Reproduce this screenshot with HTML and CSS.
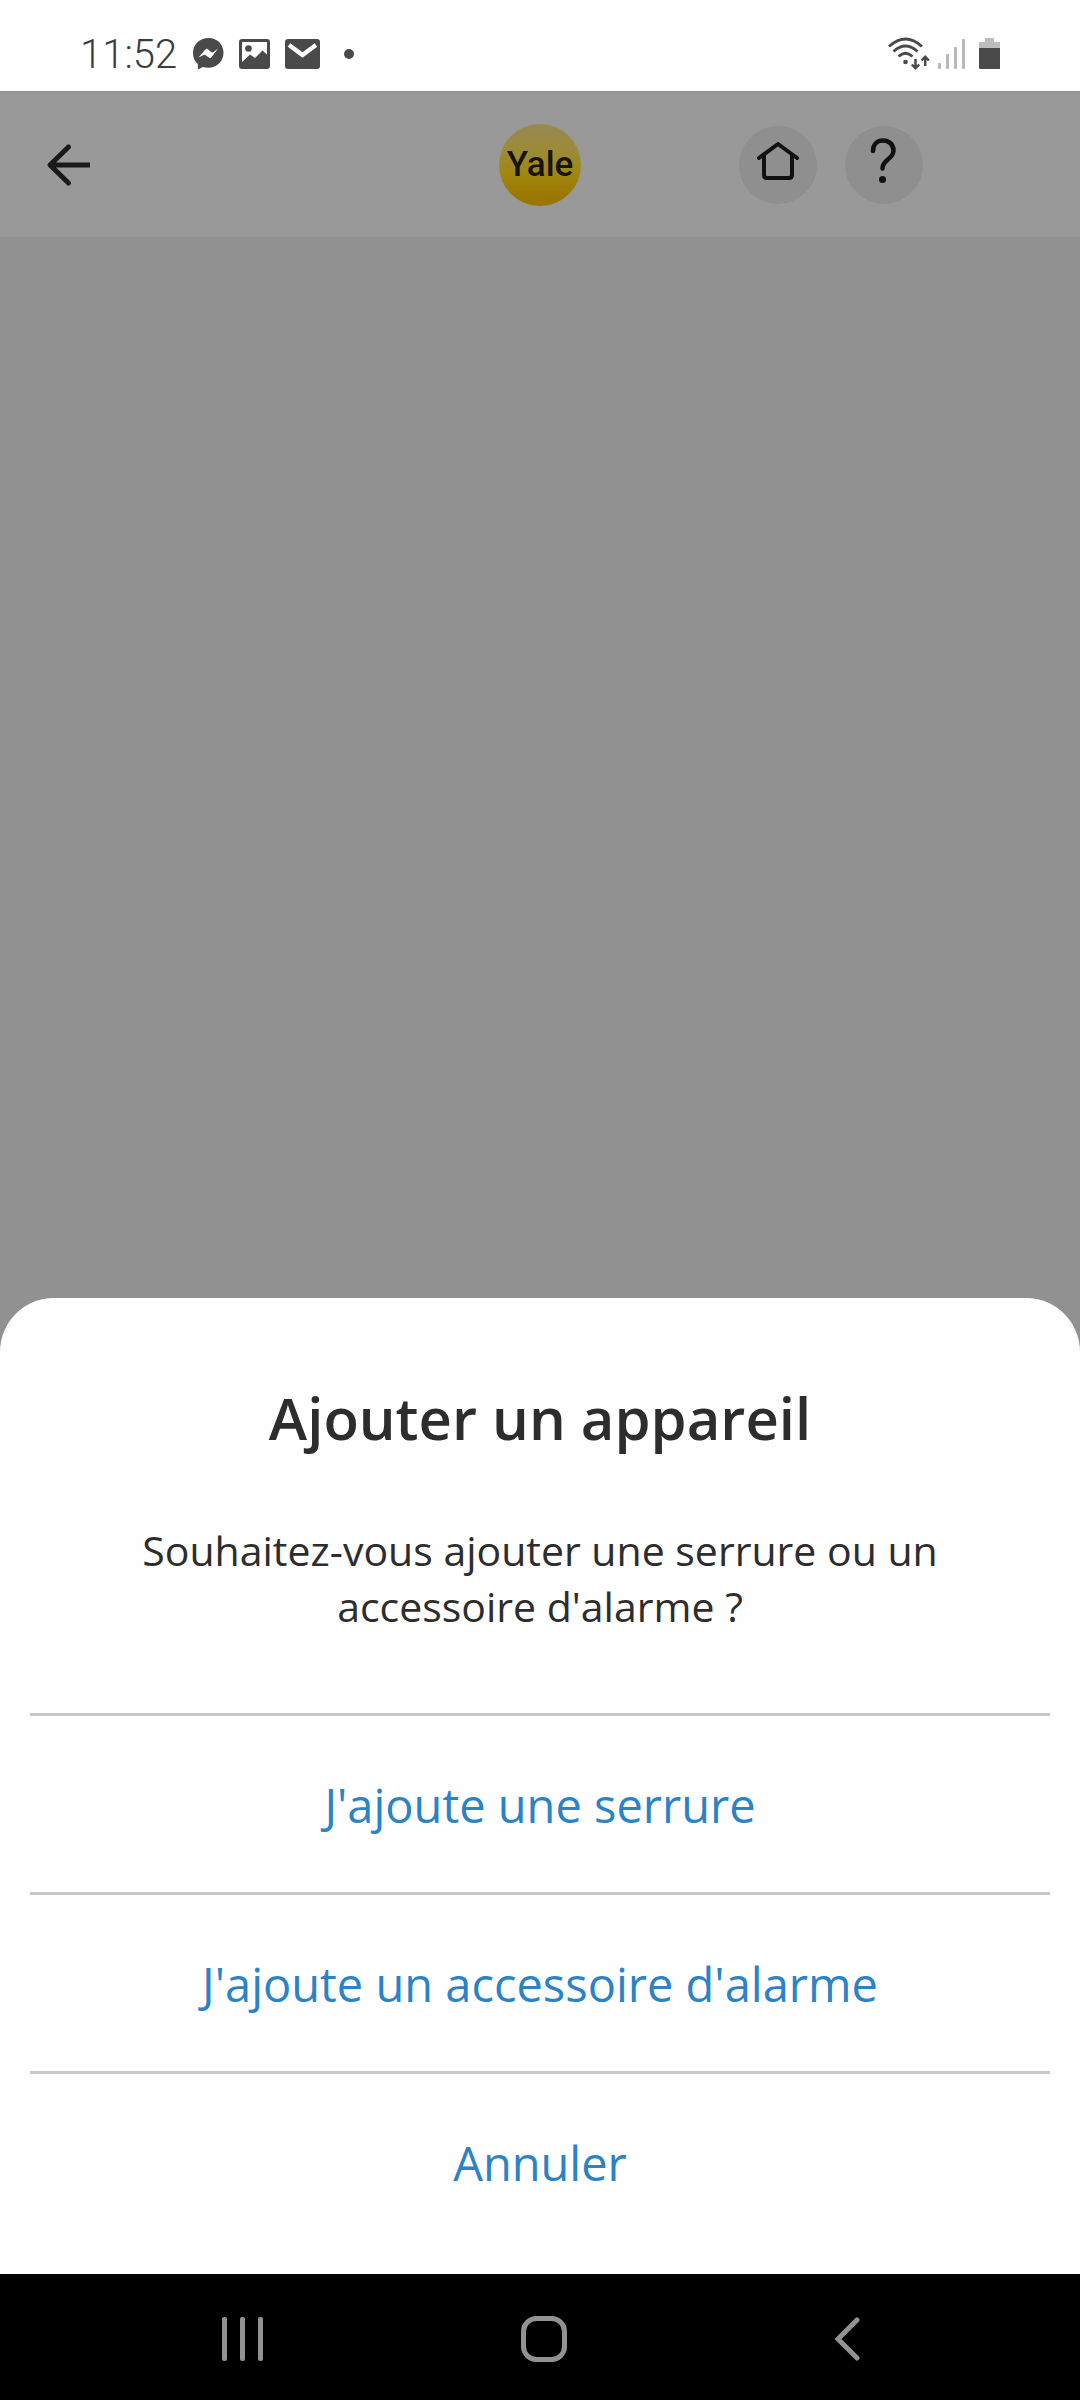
FILE: index.html
```html
<!DOCTYPE html>
<html lang="fr">
<head>
<meta charset="utf-8">
<meta name="viewport" content="width=device-width, initial-scale=1">
<title>Ajouter un appareil</title>
<link rel="stylesheet" href="styles.css">
</head>
<body>
<div class="screen">
  <div class="status-bar">
    <div class="status-left">
      <time class="clock">11:52</time>
      <svg width="32" height="32" viewBox="0 0 32 32" aria-hidden="true">
        <path fill="#4a4a4a" d="M16.500 0C25.500 0 31.500 6.500 31.500 14.800S25 29.800 16.300 29.800c-1.900 0-3.700-.3-5.300-.8L6 31.500 5.800 26C2.600 23.300 1 19.400 1 14.900 1 6.500 7.600 0 16.500 0Z"/>
        <path fill="#fff" d="M6.500 19.500 13.300 11.500q1.400-1.200 2.800-.1l3.400 2.800q.8.500 1.600 0l5-3.800-6.900 9q-1.100 1.200-2.500.2l-3.300-2.600q-.8-.6-1.600 0Z"/>
      </svg>
      <svg width="31" height="30" viewBox="0 0 31 30" aria-hidden="true">
        <rect width="31" height="30" rx="3" fill="#4a4a4a"/>
        <path fill="#fff" d="M3 3H28V15.500L23.500 11.500 16 19 11 15.500 3 23Z"/>
        <circle cx="9.500" cy="9.500" r="3.300" fill="#4a4a4a"/>
      </svg>
      <svg width="35" height="30" viewBox="0 0 35 30" aria-hidden="true">
        <rect width="35" height="30" rx="3" fill="#4a4a4a"/>
        <path fill="none" stroke="#fff" stroke-width="4.500" d="M4 6 17.500 16 31 6"/>
      </svg>
      <span class="more-dot"></span>
    </div>
    <div class="status-right">
      <svg width="42" height="34" viewBox="0 0 42 34" fill="none" stroke="#4a4a4a" aria-hidden="true">
        <path stroke-width="2.800" d="M1 9.500Q17.500-5.500 34 9.500M5.500 14.500Q17.500 3.500 29.500 14.500M10.500 19.500Q17.500 13 24.500 19.500"/>
        <circle cx="17.500" cy="25" r="2.300" fill="#4a4a4a" stroke="none"/>
        <path stroke-width="2.500" d="M27.500 22V31M23.800 27.500 27.500 31.300 31.200 27.500M37.200 29V20M33.500 23.500 37.200 19.700 40.900 23.500"/>
      </svg>
      <svg width="28" height="32" viewBox="0 0 28 32" fill="#b8b8b8" aria-hidden="true">
        <rect x="0" y="25" width="3" height="6" rx="1"/>
        <rect x="8" y="16" width="3" height="15" rx="1"/>
        <rect x="16" y="9" width="3" height="22" rx="1"/>
        <rect x="24" y="1" width="3" height="30" rx="1"/>
      </svg>
      <svg class="battery" width="21" height="32" viewBox="0 0 21 32" aria-hidden="true">
        <path fill="#bdbdbd" d="M6 0H15V4H21V11H0V4H6Z"/>
        <path fill="#4a4a4a" d="M0 10H21V31H1.500Q0 31 0 29.500Z"/>
      </svg>
    </div>
  </div>

  <header class="app-bar">
    <button class="back" aria-label="Retour">
      <svg width="44" height="44" viewBox="0 0 44 44" fill="none" stroke="#1a1a1a" stroke-width="5" stroke-linejoin="round" aria-hidden="true">
        <path d="M44 22H4"/><path stroke-linecap="round" d="M22.500 4 4 22 22.500 40"/>
      </svg>
    </button>
    <span class="logo">Yale</span>
    <div class="actions">
      <button class="round" aria-label="Accueil">
        <svg width="42" height="42" viewBox="0 0 42 42" fill="none" stroke="#111" stroke-width="4" stroke-linecap="round" stroke-linejoin="round" aria-hidden="true">
          <path d="M2 18 21 4 40 18M7 15V35Q7 38 10 38H32Q35 38 35 35V15"/>
        </svg>
      </button>
      <button class="round" aria-label="Aide">
        <svg width="28" height="46" viewBox="0 0 28 46" fill="none" stroke="#111" stroke-width="4.500" stroke-linecap="round" aria-hidden="true">
          <path d="M3 13C3 6.500 7 2.500 13 2.500S23.500 6.500 23.500 12.500C23.500 21.500 12.500 21 12.500 30.500"/>
          <circle cx="12.500" cy="41.500" r="3.500" fill="#111" stroke="none"/>
        </svg>
      </button>
    </div>
  </header>

  <main class="backdrop">
    <section class="sheet" role="dialog" aria-labelledby="sheet-title">
      <h1 class="title" id="sheet-title">Ajouter un appareil</h1>
      <p class="message">Souhaitez-vous ajouter une serrure ou un accessoire d'alarme ?</p>
      <div class="choices">
        <button class="choice">J'ajoute une serrure</button>
        <button class="choice">J'ajoute un accessoire d'alarme</button>
        <button class="choice">Annuler</button>
      </div>
    </section>
  </main>

  <nav class="system-nav">
    <button aria-label="Applications récentes">
      <svg width="41" height="46" viewBox="0 0 41 46" fill="#929292" aria-hidden="true">
        <rect x="0" y="1" width="5" height="44" rx="2"/><rect x="18" y="1" width="5" height="44" rx="2"/><rect x="36" y="1" width="5" height="44" rx="2"/>
      </svg>
    </button>
    <button aria-label="Écran d'accueil">
      <svg width="46" height="46" viewBox="0 0 46 46" fill="none" stroke="#929292" stroke-width="5" aria-hidden="true">
        <rect x="2.500" y="2.500" width="41" height="41" rx="13"/>
      </svg>
    </button>
    <button aria-label="Précédent">
      <svg width="26" height="46" viewBox="0 0 26 46" fill="none" stroke="#929292" stroke-width="5" stroke-linecap="round" aria-hidden="true">
        <path d="M23 4 4 23 23 42"/>
      </svg>
    </button>
  </nav>
</div>
</body>
</html>
```
FILE: styles.css
```css
* {
  box-sizing: border-box;
}

body {
  margin: 0;
  font-family: "Open Sans", "Noto Sans", sans-serif;
  color: #2d2d2d;
  background: #fff;
}

button {
  margin: 0;
  padding: 0;
  border: 0;
  background: none;
  font: inherit;
  color: inherit;
  cursor: pointer;
}

svg {
  display: block;
}

.screen {
  display: flex;
  flex-direction: column;
  min-height: 100vh;
}

/* Phone status bar */
.status-bar {
  display: flex;
  justify-content: space-between;
  align-items: center;
  height: 91px;
  padding: 16px 80px 0;
}

.status-left {
  display: flex;
  align-items: center;
  gap: 15px;
}

.clock {
  padding-top: 2px;
  font: 300 40px/40px Roboto, sans-serif;
  color: #3c3c3c;
}

.more-dot {
  width: 10px;
  height: 10px;
  margin-left: 9px;
  border-radius: 50%;
  background: #4a4a4a;
}

.status-right {
  display: flex;
  align-items: center;
  gap: 8px;
}

.battery {
  margin-left: 5px;
}

/* Dimmed app header */
.app-bar {
  display: grid;
  grid-template-columns: 1fr auto 1fr;
  align-items: center;
  height: 146px;
  padding: 0 46px;
  background: #999;
  border-top: 1px solid #8c8c8c;
}

.back {
  justify-self: start;
}

.logo {
  display: flex;
  justify-content: center;
  width: 82px;
  height: 82px;
  border-radius: 50%;
  background: linear-gradient(#98894c 10%, #9c8b35 35%, #a08611 60%, #9a7800 90%);
  font: 500 35px/82px Roboto, sans-serif;
  color: #16140c;
}

.actions {
  display: flex;
  justify-content: flex-end;
  gap: 28px;
  padding-right: 111px;
}

.round {
  display: grid;
  justify-content: center;
  align-content: center;
  width: 78px;
  height: 78px;
  padding-bottom: 8px;
  border-radius: 50%;
  background: #8f8f8f;
}

.backdrop {
  display: flex;
  flex: 1;
  flex-direction: column;
  justify-content: flex-end;
  background: #919191;
}

/* Bottom sheet */
.sheet {
  padding: 80px 30px 24px;
  border-radius: 54px 54px 0 0;
  background: #fefefe;
  text-align: center;
}

.title {
  margin: 0 0 64px;
  font-size: 58px;
  line-height: 80px;
  font-weight: 600;
}

.message {
  max-width: 840px;
  margin: 0 auto 79px;
  font-size: 41px;
  line-height: 56px;
}

.choices {
  display: flex;
  flex-direction: column;
}

.choice {
  height: 179px;
  padding-top: 2px;
  border-top: 3px solid #c9c9c9;
  font-size: 47px;
  color: #2a83c6;
}

/* Phone navigation bar */
.system-nav {
  display: grid;
  grid-template-columns: repeat(3, 1fr);
  place-items: center;
  height: 126px;
  padding: 3px 82px 0 91px;
  background: #000;
}
```
